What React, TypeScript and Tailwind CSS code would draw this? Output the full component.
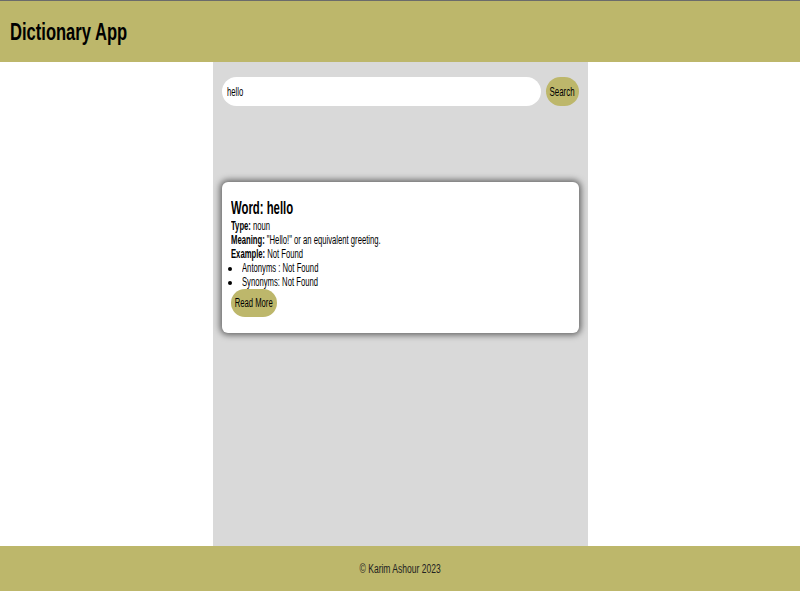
import type { ReactNode } from 'react';

// the reference uses a condensed face; no narrow font is installed, so squeeze Liberation Sans
const Narrow = ({ children, className = '' }: { children: ReactNode; className?: string }) => (
  <span className={`inline-block whitespace-nowrap ${className}`}>{children}</span>
);

export default function App() {
  return (
    <div className="min-h-[591px] flex flex-col border-t border-[#6b6b6b] font-['Liberation_Sans',Arial,sans-serif] text-black">
      <header className="h-[61px] bg-[#bdb76b] flex items-center px-[10px]">
        <h1 className="text-[24px] font-bold">
          <Narrow className="scale-x-[0.69] origin-left">Dictionary App</Narrow>
        </h1>
      </header>

      <main className="flex-1 w-[375px] mx-auto bg-[#d9d9d9] px-[9px] pt-[15px]">
        <div className="flex items-center gap-[5px]">
          <div className="flex-1 h-[29px] rounded-full bg-white px-[5px] overflow-hidden flex items-center">
            <input
              defaultValue="hello"
              className="w-[156%] shrink-0 scale-x-[0.64] origin-left bg-transparent text-[12px] outline-none"
            />
          </div>
          <button className="w-[33px] h-[29px] rounded-full bg-[#bdb76b] text-[12px] flex items-center justify-center">
            <Narrow className="scale-x-[0.66] origin-center">Search</Narrow>
          </button>
        </div>

        <div className="mt-[76px] bg-white rounded-[6px] shadow-[0_0_6px_2px_rgba(0,0,0,0.55)] px-[9px] pt-[16px] pb-[16px] text-[12px] leading-[14px]">
          <h2 className="text-[18px] font-bold leading-[20px] mb-[1px]">
            <Narrow className="scale-x-[0.63] origin-left">Word: hello</Narrow>
          </h2>
          <p>
            <Narrow className="scale-x-[0.64] origin-left"><b>Type:</b> noun</Narrow>
          </p>
          <p>
            <Narrow className="scale-x-[0.64] origin-left"><b>Meaning:</b> "Hello!" or an equivalent greeting.</Narrow>
          </p>
          <p>
            <Narrow className="scale-x-[0.64] origin-left"><b>Example:</b> Not Found</Narrow>
          </p>
          <ul className="list-disc pl-[11px]">
            <li>
              <Narrow className="scale-x-[0.64] origin-left">Antonyms : Not Found</Narrow>
            </li>
            <li>
              <Narrow className="scale-x-[0.64] origin-left">Synonyms: Not Found</Narrow>
            </li>
          </ul>
          <button className="w-[46px] h-[28px] rounded-full bg-[#bdb76b] text-[12px] flex items-center justify-center">
            <Narrow className="scale-x-[0.64] origin-center">Read More</Narrow>
          </button>
        </div>
      </main>

      <footer className="h-[45px] bg-[#bdb76b] flex items-center justify-center text-[12px] text-[#222]">
        <Narrow className="scale-x-[0.71] origin-center">© Karim Ashour 2023</Narrow>
      </footer>
    </div>
  );
}
